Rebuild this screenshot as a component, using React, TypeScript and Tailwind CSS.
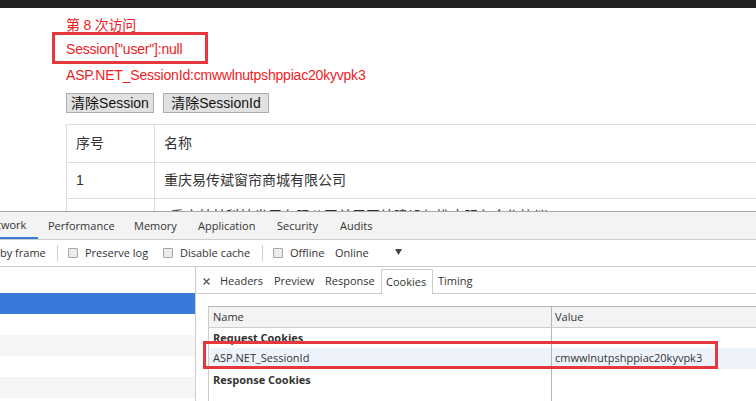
const pageFont = "font-['Liberation_Sans','Noto_Sans_CJK_SC',sans-serif]";
const devFont = "font-['Open_Sans','Noto_Sans',sans-serif]";

function Checkbox() {
  return <span className="block h-[10px] w-[10px] rounded-[1px] border border-[#a6a6a6] bg-[#ececec]" />;
}

function CloseIcon() {
  return (
    <svg width="7" height="7" viewBox="0 0 7 7" className="block">
      <path d="M0.5 0.5 L6.5 6.5 M6.5 0.5 L0.5 6.5" stroke="#555" strokeWidth="1.3" />
    </svg>
  );
}

const mainTabs = [
  { label: "Performance", w: "w-[86px]" },
  { label: "Memory", w: "w-[64px]" },
  { label: "Application", w: "w-[79px]" },
  { label: "Security", w: "w-[63px]" },
  { label: "Audits", w: "w-[53px]" },
];

export default function App() {
  return (
    <div className="relative h-[401px] w-[756px] overflow-hidden bg-white">
      <div className="h-[8px] bg-[#222]" />

      {/* page */}
      <div className={`h-[203px] overflow-hidden pl-[66px] ${pageFont}`}>
        <div className="pt-[5px] text-[14px] leading-[24px] tracking-[-0.2px] text-[#ee1c25]">
          <p>第 8 次访问</p>
          <p>Session["user"]:null</p>
          <p className="mt-[2px]">ASP.NET_SessionId:cmwwlnutpshppiac20kyvpk3</p>
        </div>
        <div className="mt-[6px] flex gap-[9px]">
          <button className="h-[20px] w-[88px] border border-[#adadad] bg-[#e1e1e1] text-[14px] leading-[18px] text-[#111]">
            清除Session
          </button>
          <button className="h-[20px] w-[106px] border border-[#adadad] bg-[#e1e1e1] text-[14px] leading-[18px] text-[#111]">
            清除SessionId
          </button>
        </div>
        <div className="mt-[11px] border-l border-t border-[#ddd] text-[14px] text-[#333]">
          <div className="flex h-[38px] border-b border-[#ddd]">
            <div className="flex w-[88px] items-center border-r border-[#ddd] pl-[9px]">序号</div>
            <div className="flex items-center pl-[9px]">名称</div>
          </div>
          <div className="flex h-[36px] border-b border-[#ddd]">
            <div className="flex w-[88px] items-center border-r border-[#ddd] pl-[9px]">1</div>
            <div className="flex items-center pl-[9px]">重庆易传斌窗帘商城有限公司</div>
          </div>
          <div className="flex h-[38px] border-b border-[#ddd] leading-[20px]">
            <div className="w-[88px] border-r border-[#ddd] pl-[9px] pt-[7px]">2</div>
            <div className="whitespace-nowrap pl-[15px] pt-[7px]">重庆某某科技发展有限公司关于网站建设与推广服务合作协议</div>
          </div>
        </div>
      </div>

      {/* devtools */}
      <div className={`flex h-[190px] flex-col text-[11px] text-[#333] ${devFont}`}>
        <div className="flex h-[29px] shrink-0 border-y border-b-[#cdcdcd] border-t-[#a8a8a8] bg-[#f3f3f3]">
          <div className="-ml-[29px] flex w-[67px] shrink-0 items-center justify-center border-b-2 border-[#3879d9] pt-[2px]">
            Network
          </div>
          {mainTabs.map((t) => (
            <div key={t.label} className={`flex shrink-0 items-center pl-[10px] pt-[1px] ${t.w}`}>
              {t.label}
            </div>
          ))}
        </div>

        <div className="flex h-[27px] shrink-0 items-center border-b border-[#cdcdcd] bg-white">
          <span className="w-[57px] shrink-0">by frame</span>
          <span className="h-[16px] w-px shrink-0 bg-[#cfcfcf]" />
          <span className="ml-[10px]"><Checkbox /></span>
          <span className="ml-[7px] w-[78px] shrink-0">Preserve log</span>
          <Checkbox />
          <span className="ml-[7px] w-[82px] shrink-0">Disable cache</span>
          <span className="h-[16px] w-px shrink-0 bg-[#cfcfcf]" />
          <span className="ml-[10px]"><Checkbox /></span>
          <span className="ml-[7px] w-[45px] shrink-0">Offline</span>
          <span className="w-[60px] shrink-0">Online</span>
          <svg width="7" height="6" viewBox="0 0 7 6" className="-mt-[2px] block">
            <path d="M0 0 H7 L3.5 6 Z" fill="#444" />
          </svg>
        </div>

        <div className="flex min-h-0 flex-1">
          <div className="w-[196px] shrink-0 border-r border-[#cdcdcd]">
            <div className="h-[26px]" />
            <div className="h-[21px] bg-[#3879d9]" />
            <div className="h-[21px]" />
            <div className="h-[21px] bg-[#f5f5f5]" />
            <div className="h-[21px]" />
            <div className="h-[21px] bg-[#f5f5f5]" />
          </div>

          <div className="flex min-w-0 flex-1 flex-col">
            <div className="flex h-[27px] shrink-0 items-end border-b border-[#cdcdcd]">
              <span className="-mb-px flex h-[25px] w-[19px] shrink-0 items-center pl-[7px]">
                <CloseIcon />
              </span>
              <span className="-mb-px flex h-[25px] w-[54px] shrink-0 items-center pl-[5px]">Headers</span>
              <span className="-mb-px flex h-[25px] w-[51px] shrink-0 items-center pl-[5px]">Preview</span>
              <span className="-mb-px flex h-[25px] w-[61px] shrink-0 items-center pl-[5px]">Response</span>
              <span className="-mb-px flex h-[25px] w-[52px] shrink-0 items-center border-x border-t border-[#cdcdcd] bg-white pl-[4px]">
                Cookies
              </span>
              <span className="-mb-px flex h-[25px] w-[46px] shrink-0 items-center pl-[5px]">Timing</span>
            </div>

            <div className="flex min-h-0 flex-1 flex-col pl-[12px] pt-[12px]">
              <div className="flex flex-1 flex-col border-l border-t border-l-[#cdcdcd] border-t-[#b5b5b5]">
                <div className="flex h-[21px] shrink-0 border-b border-[#cdcdcd] bg-[#f3f3f3]">
                  <div className="flex w-[343px] shrink-0 items-center border-r border-[#b5b5b5] pl-[4px]">Name</div>
                  <div className="flex items-center pl-[3px]">Value</div>
                </div>
                <div className="flex h-[20px] shrink-0">
                  <div className="flex w-[343px] shrink-0 items-center border-r border-[#b5b5b5] pl-[4px] font-bold">
                    Request Cookies
                  </div>
                </div>
                <div className="flex h-[21px] shrink-0 bg-[#eef3fb]">
                  <div className="flex w-[343px] shrink-0 items-center border-r border-[#b5b5b5] pl-[4px]">ASP.NET_SessionId</div>
                  <div className="flex items-center pl-[3px]">cmwwlnutpshppiac20kyvpk3</div>
                </div>
                <div className="flex h-[22px] shrink-0">
                  <div className="flex w-[343px] shrink-0 items-center border-r border-[#b5b5b5] pl-[4px] font-bold">
                    Response Cookies
                  </div>
                </div>
                <div className="flex flex-1">
                  <div className="w-[343px] shrink-0 border-r border-[#b5b5b5]" />
                </div>
              </div>
            </div>
          </div>
        </div>
      </div>

      {/* annotation boxes */}
      <div className="pointer-events-none absolute left-[52px] top-[32px] h-[32px] w-[156px] border-[3px] border-[#e6373d]" />
      <div className="pointer-events-none absolute left-[203px] top-[341px] h-[28px] w-[515px] border-[3px] border-[#e6373d]" />
    </div>
  );
}
